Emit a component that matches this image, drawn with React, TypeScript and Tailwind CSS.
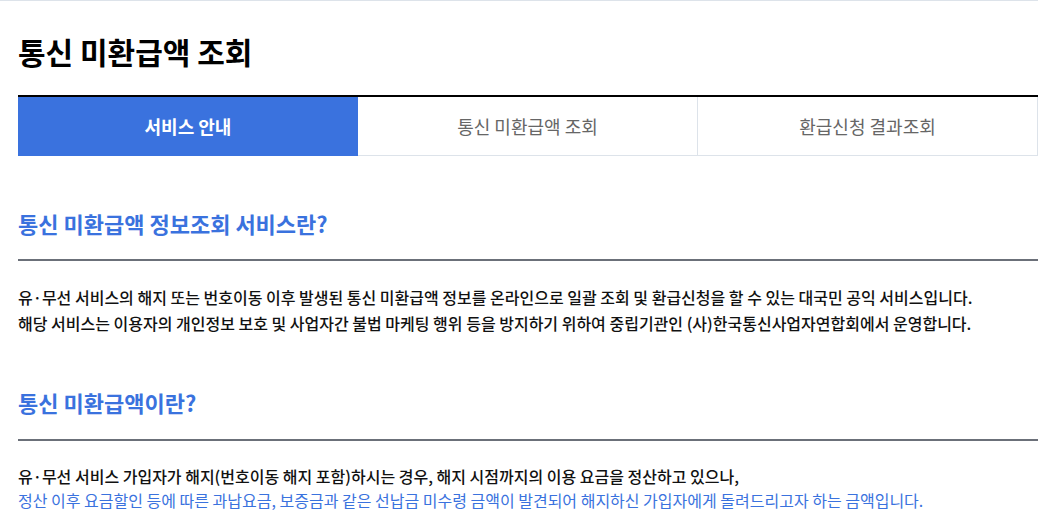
export default function App() {
    const tabs = ['서비스 안내', '통신 미환급액 조회', '환급신청 결과조회'];

    return (
        <div
            className="min-h-[527px] bg-white border-t border-[#dde3ea]"
            style={{ fontFamily: '"Noto Sans CJK KR", "Noto Sans", sans-serif' }}
        >
            <div className="pl-[18px]">
                <h1 className="pt-[30px] text-[30px] font-bold leading-[40px] text-black">
                    통신 미환급액 조회
                </h1>

                {/* 탭 메뉴 */}
                <div className="mt-[24px] flex border-t-2 border-black">
                    {tabs.map((tab, idx) => (
                        <div
                            key={tab}
                            className={
                                idx === 0
                                    ? 'flex h-[59px] w-[340px] items-center justify-center bg-[#3a72de] text-[18px] font-bold text-white'
                                    : 'flex h-[59px] w-[340px] items-center justify-center border-b border-r border-[#dde3ea] text-[18px] text-[#666]'
                            }
                        >
                            {tab}
                        </div>
                    ))}
                </div>

                {/* 서비스 안내 */}
                <section className="mt-[52px]">
                    <h2 className="text-[22px] font-bold leading-[30px] text-[#3a72de]">
                        통신 미환급액 정보조회 서비스란?
                    </h2>
                    <div className="mt-[21px] h-[2px] bg-[#6b7079]" />
                    <div className="mt-[23px] text-[16px] font-medium leading-[26px] text-[#111]">
                        <p>유·무선 서비스의 해지 또는 번호이동 이후 발생된 통신 미환급액 정보를 온라인으로 일괄 조회 및 환급신청을 할 수 있는 대국민 공익 서비스입니다.</p>
                        <p>해당 서비스는 이용자의 개인정보 보호 및 사업자간 불법 마케팅 행위 등을 방지하기 위하여 중립기관인 (사)한국통신사업자연합회에서 운영합니다.</p>
                    </div>
                </section>

                <section className="mt-[51px]">
                    <h2 className="text-[22px] font-bold leading-[30px] text-[#3a72de]">
                        통신 미환급액이란?
                    </h2>
                    <div className="mt-[22px] h-[2px] bg-[#6b7079]" />
                    <div className="mt-[23px] text-[16px] leading-[24px]">
                        <p className="font-medium text-[#111]">
                            유·무선 서비스 가입자가 해지(번호이동 해지 포함)하시는 경우, 해지 시점까지의 이용 요금을 정산하고 있으나,
                        </p>
                        <p className="text-[#3a72de]">
                            정산 이후 요금할인 등에 따른 과납요금, 보증금과 같은 선납금 미수령 금액이 발견되어 해지하신 가입자에게 돌려드리고자 하는 금액입니다.
                        </p>
                    </div>
                </section>
            </div>
        </div>
    );
}
